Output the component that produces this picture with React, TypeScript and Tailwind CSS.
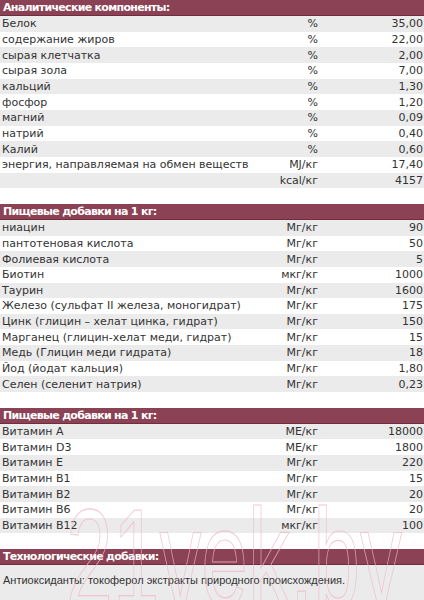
import React from "react";

type Row = [string, string, string];

const sections: { title: string; rows: Row[] }[] = [
  {
    title: "Аналитические компоненты:",
    rows: [
      ["Белок", "%", "35,00"],
      ["содержание жиров", "%", "22,00"],
      ["сырая клетчатка", "%", "2,00"],
      ["сырая зола", "%", "7,00"],
      ["кальций", "%", "1,30"],
      ["фосфор", "%", "1,20"],
      ["магний", "%", "0,09"],
      ["натрий", "%", "0,40"],
      ["Калий", "%", "0,60"],
      ["энергия, направляемая на обмен веществ", "MJ/кг", "17,40"],
      ["", "kcal/кг", "4157"],
    ],
  },
  {
    title: "Пищевые добавки на 1 кг:",
    rows: [
      ["ниацин", "Мг/кг", "90"],
      ["пантотеновая кислота", "Мг/кг", "50"],
      ["Фолиевая кислота", "Мг/кг", "5"],
      ["Биотин", "мкг/кг", "1000"],
      ["Таурин", "Мг/кг", "1600"],
      ["Железо (сульфат II железа, моногидрат)", "Мг/кг", "175"],
      ["Цинк (глицин – хелат цинка, гидрат)", "Мг/кг", "150"],
      ["Марганец (глицин-хелат меди, гидрат)", "Мг/кг", "15"],
      ["Медь (Глицин меди гидрата)", "Мг/кг", "18"],
      ["Йод (йодат кальция)", "Мг/кг", "1,80"],
      ["Селен (селенит натрия)", "Мг/кг", "0,23"],
    ],
  },
  {
    title: "Пищевые добавки на 1 кг:",
    rows: [
      ["Витамин A", "МЕ/кг", "18000"],
      ["Витамин D3", "МЕ/кг", "1800"],
      ["Витамин E", "Мг/кг", "220"],
      ["Витамин B1", "Мг/кг", "15"],
      ["Витамин B2", "Мг/кг", "20"],
      ["Витамин B6", "Мг/кг", "20"],
      ["Витамин B12", "мкг/кг", "100"],
    ],
  },
];

function Header({ title }: { title: string }) {
  return (
    <div className="h-[16px] bg-[#8b4254] border-b border-[#6f2d3d] pl-[3px] flex items-center text-white font-bold text-[11px] tracking-[-0.7px] leading-none">
      {title}
    </div>
  );
}

export default function App() {
  return (
    <div
      className="relative w-[424px] h-[600px] overflow-hidden bg-white text-[#333333]"
      style={{ fontFamily: '"DejaVu Sans", Verdana, sans-serif' }}
    >
      {sections.map((s, si) => (
        <div key={si}>
          <Header title={s.title} />
          {s.rows.map((r, i) => (
            <div
              key={i}
              className={`h-[15.66px] grid grid-cols-[228px_90px_106px] items-center text-[11px] leading-none ${
                i % 2 === 0 ? "bg-[#ebebeb]" : "bg-white"
              }`}
            >
              <div className="pl-[2px] whitespace-nowrap overflow-visible">{r[0]}</div>
              <div className="text-right whitespace-nowrap">{r[1]}</div>
              <div className="text-right pr-[1px]">{r[2]}</div>
            </div>
          ))}
          <div className="h-[15.66px] bg-white" />
        </div>
      ))}
      <Header title="Технологические добавки:" />
      <div
        className="bg-[#ebebeb] h-[40px] pl-[3px] pt-[9px] text-[11px] leading-[13px]"
        style={{ fontFamily: '"Liberation Sans", Arial, sans-serif' }}
      >
        Антиоксиданты: токоферол экстракты природного происхождения.
      </div>
      <svg
        aria-hidden="true"
        className="absolute left-0 top-0 pointer-events-none"
        width="424"
        height="600"
        viewBox="0 0 424 600"
      >
        <text
          x="66"
          y="606"
          textLength="336"
          lengthAdjust="spacingAndGlyphs"
          fontSize="140"
          fontFamily="Liberation Sans, Arial, sans-serif"
          fill="none"
          stroke="#f2b8c6"
          strokeWidth="1.2"
          opacity="0.75"
        >
          21vek.by
        </text>
      </svg>
    </div>
  );
}
